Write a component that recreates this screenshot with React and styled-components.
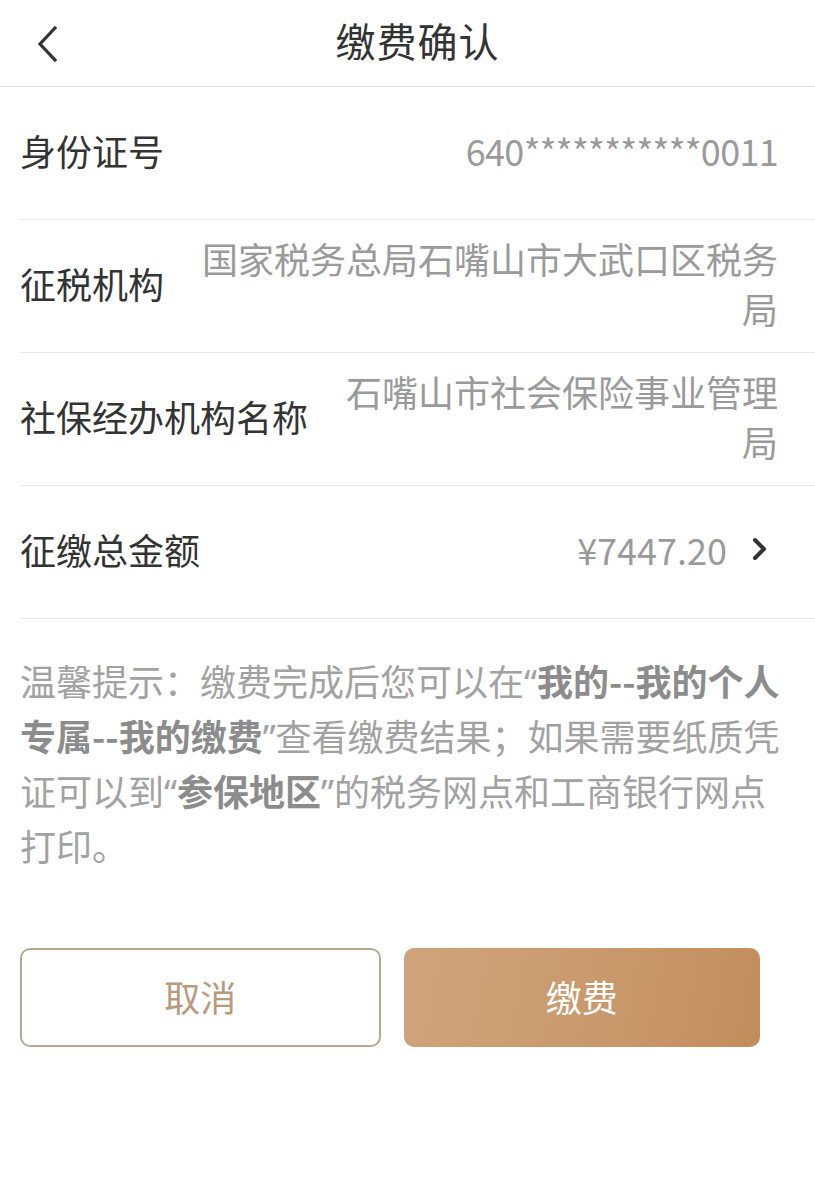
import React from "react";
import styled, { createGlobalStyle } from "styled-components";

const Global = createGlobalStyle`
  html, body { margin: 0; padding: 0; background: #fff; }
  body { font-family: "Noto Sans CJK SC", "Noto Sans", sans-serif; -webkit-font-smoothing: antialiased; }
  * { box-sizing: border-box; }
`;

const Page = styled.div`
  width: 815px;
  min-height: 1193px;
  background: #fff;
  display: flex;
  flex-direction: column;
`;

const Header = styled.header`
  position: relative;
  height: 87px;
  padding: 0 0 6px 20px;
  border-bottom: 1px solid #e3e3e3;
  display: flex;
  align-items: center;
  justify-content: center;
`;

const BackButton = styled.button`
  position: absolute;
  left: 28px;
  top: 22px;
  width: 40px;
  height: 44px;
  border: 0;
  padding: 0;
  background: transparent;
  display: flex;
  align-items: center;
  justify-content: center;
`;

const Title = styled.h1`
  margin: 0;
  font-size: 40px;
  font-weight: 400;
  color: #333;
  line-height: 1;
  letter-spacing: 1px;
`;

const List = styled.div`
  display: flex;
  flex-direction: column;
  padding-left: 20px;
`;

const Row = styled.div`
  min-height: 133px;
  display: flex;
  align-items: center;
  gap: 30px;
  padding: 13px ${(p) => (p.$arrow ? "46px" : "37px")} 19px 0;
  border-bottom: 1px solid #e8e8e8;
`;

const Label = styled.div`
  flex: none;
  font-size: 36px;
  color: #333;
  line-height: 50px;
`;

const Value = styled.div`
  flex: 1;
  text-align: right;
  font-size: 36px;
  color: #9a9a9a;
  line-height: 50px;
  letter-spacing: ${(p) => (p.$tight ? "-0.7px" : "0")};
`;

const Chevron = styled.svg`
  flex: none;
  margin-left: -6px;
`;

const Notice = styled.div`
  padding: 34px 20px 0 20px;
  font-size: 36px;
  line-height: 55px;
  color: #a2a2a2;
`;

const Line = styled.span`
  display: block;
  height: 55px;
  white-space: nowrap;
`;

const Strong = styled.b`
  font-weight: 700;
  color: #8c8c8c;
`;

const Quote = styled.span`
  font-family: "Noto Sans", sans-serif;
  line-height: 1;
`;

const Actions = styled.div`
  display: flex;
  gap: 23px;
  padding: 75px 55px 0 20px;
`;

const Btn = styled.button`
  flex: 1;
  height: 99px;
  padding: 0 0 4px;
  border-radius: 10px;
  font-family: "Noto Sans CJK SC", sans-serif;
  font-size: 36px;
  cursor: pointer;
  ${(p) =>
    p.$primary
      ? `
    border: 0;
    color: #fff;
    background: linear-gradient(100deg, #cfa47c 0%, #c99a6e 50%, #c28d5d 100%);
  `
      : `
    border: 2px solid #bba98f;
    color: #b99a7c;
    background: #fff;
  `}
`;

export default function App() {
  return (
    <Page>
      <Global />
      <Header>
        <BackButton aria-label="返回">
          <svg width="24" height="38" viewBox="0 0 24 38">
            <path d="M19 3 L4 19 L19 35" fill="none" stroke="#333" strokeWidth="3.2" strokeLinecap="square" strokeLinejoin="miter" />
          </svg>
        </BackButton>
        <Title>缴费确认</Title>
      </Header>
      <List>
        <Row>
          <Label>身份证号</Label>
          <Value $tight>640***********0011</Value>
        </Row>
        <Row>
          <Label>征税机构</Label>
          <Value>国家税务总局石嘴山市大武口区税务局</Value>
        </Row>
        <Row>
          <Label>社保经办机构名称</Label>
          <Value>石嘴山市社会保险事业管理局</Value>
        </Row>
        <Row $arrow>
          <Label>征缴总金额</Label>
          <Value>¥7447.20</Value>
          <Chevron width="18" height="26" viewBox="0 0 18 26">
            <path d="M4 4 L13 13 L4 22" fill="none" stroke="#333" strokeWidth="4" strokeLinecap="round" strokeLinejoin="round" />
          </Chevron>
        </Row>
      </List>
      <Notice>
        <Line>
          温馨提示：缴费完成后您可以在<Quote>“</Quote>
          <Strong>我的--我的个人</Strong>
        </Line>
        <Line>
          <Strong>专属--我的缴费</Strong>
          <Quote>”</Quote>查看缴费结果；如果需要纸质凭
        </Line>
        <Line>
          证可以到<Quote>“</Quote>
          <Strong>参保地区</Strong>
          <Quote>”</Quote>的税务网点和工商银行网点
        </Line>
        <Line>打印。</Line>
      </Notice>
      <Actions>
        <Btn>取消</Btn>
        <Btn $primary>缴费</Btn>
      </Actions>
    </Page>
  );
}
